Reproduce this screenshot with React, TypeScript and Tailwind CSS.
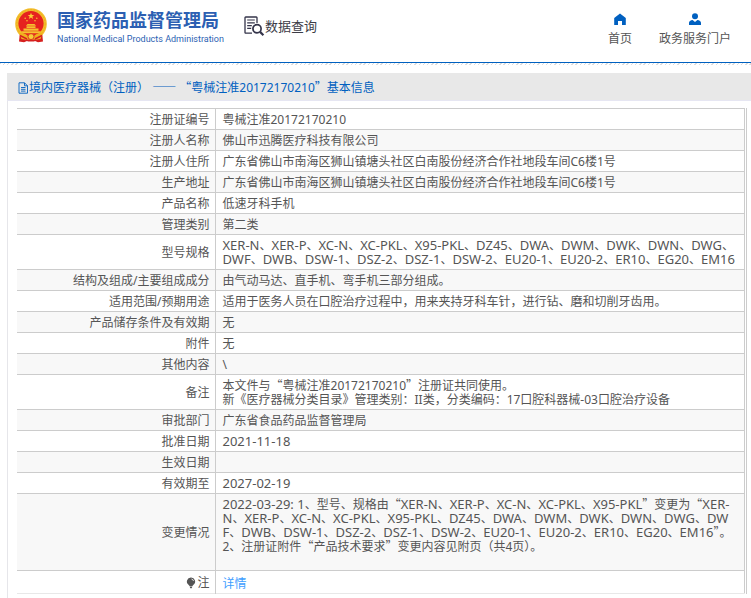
import React from 'react';

// Quotes take the full width of a Chinese character
const Wide: React.FC<{ children: React.ReactNode }> = ({ children }) => (
    <span className="font-['Noto_Sans_CJK_SC',sans-serif] leading-none">{children}</span>
);

const Quoted: React.FC<{ children: React.ReactNode }> = ({ children }) => (
    <>
        <Wide>“</Wide>
        {children}
        <Wide>”</Wide>
    </>
);

// Latin model codes and dates are set slightly larger than the Chinese text
const Codes: React.FC<{ text: string }> = ({ text }) => (
    <>
        {text.split('、').map((code, i) => (
            <React.Fragment key={i}>
                {i > 0 && '、'}
                <span className="text-[13px] leading-none">{code}</span>
            </React.Fragment>
        ))}
    </>
);

const rows: { label: string; value: React.ReactNode }[] = [
    { label: '注册证编号', value: '粤械注准20172170210' },
    { label: '注册人名称', value: '佛山市迅腾医疗科技有限公司' },
    { label: '注册人住所', value: '广东省佛山市南海区狮山镇塘头社区白南股份经济合作社地段车间C6楼1号' },
    { label: '生产地址', value: '广东省佛山市南海区狮山镇塘头社区白南股份经济合作社地段车间C6楼1号' },
    { label: '产品名称', value: '低速牙科手机' },
    { label: '管理类别', value: '第二类' },
    {
        label: '型号规格',
        value: (
            <>
                <Codes text="XER-N、XER-P、XC-N、XC-PKL、X95-PKL、DZ45、DWA、DWM、DWK、DWN、DWG、" />
                <br />
                <Codes text="DWF、DWB、DSW-1、DSZ-2、DSZ-1、DSW-2、EU20-1、EU20-2、ER10、EG20、EM16" />
            </>
        ),
    },
    { label: '结构及组成/主要组成成分', value: '由气动马达、直手机、弯手机三部分组成。' },
    { label: '适用范围/预期用途', value: '适用于医务人员在口腔治疗过程中，用来夹持牙科车针，进行钻、磨和切削牙齿用。' },
    { label: '产品储存条件及有效期', value: '无' },
    { label: '附件', value: '无' },
    { label: '其他内容', value: '\\' },
    {
        label: '备注',
        value: (
            <>
                本文件与<Quoted>粤械注准20172170210</Quoted>注册证共同使用。
                <br />
                新《医疗器械分类目录》管理类别：II类，分类编码：17口腔科器械-03口腔治疗设备
            </>
        ),
    },
    { label: '审批部门', value: '广东省食品药品监督管理局' },
    { label: '批准日期', value: <Codes text="2021-11-18" /> },
    { label: '生效日期', value: '' },
    { label: '有效期至', value: <Codes text="2027-02-19" /> },
    {
        label: '变更情况',
        value: (
            <>
                <Codes text="2022-03-29: 1" />、型号、规格由
                <Quoted>
                    <Codes text="XER-N、XER-P、XC-N、XC-PKL、X95-PKL" />
                </Quoted>
                变更为<Wide>“</Wide>
                <Codes text="XER-" />
                <br />
                <Codes text="N、XER-P、XC-N、XC-PKL、X95-PKL、DZ45、DWA、DWM、DWK、DWN、DWG、DW" />
                <br />
                <Codes text="F、DWB、DSW-1、DSZ-2、DSZ-1、DSW-2、EU20-1、EU20-2、ER10、EG20、EM16" />
                <Wide>”</Wide>。
                <br />
                2、注册证附件<Quoted>产品技术要求</Quoted>变更内容见附页（共4页）。
                <br />
                &nbsp;
            </>
        ),
    },
];

const Emblem = () => (
    <svg viewBox="0 0 32 35" className="h-[35px] w-8 shrink-0" aria-hidden="true">
        <path d="M5 24 4 33.500l5 .7 3-1.200h8l3 1.200 5-.7-1-9.500z" fill="#d6201f" />
        <circle cx="16" cy="16" r="15.800" fill="#f3bd2a" />
        <circle cx="16" cy="16" r="14.200" fill="none" stroke="#e5a51d" strokeWidth=".8" strokeDasharray="1.500 1.500" />
        <circle cx="16" cy="15.600" r="12.600" fill="#e6231f" />
        <path d="m16 4.800.9 2.300h2.400l-1.900 1.500.7 2.400-2.100-1.400-2.100 1.400.7-2.400-1.900-1.500h2.400z" fill="#f9cf35" />
        <g fill="#f5c22f">
            <circle cx="10.200" cy="10.200" r=".8" />
            <circle cx="21.800" cy="10.200" r=".8" />
            <circle cx="12" cy="12.800" r=".8" />
            <circle cx="20" cy="12.800" r=".8" />
            <path d="M12.500 16h7l1.500 1.800H11zM11.500 18.300h9v1.700h-9zM8.500 20.500h15v2.200h-15zM6 23.200h20l-1.600 2H7.600z" />
        </g>
        <path d="M4.500 25.500c4-.6 6.500.2 8 2.500h7c1.500-2.300 4-3.100 8-2.500l-2 5.500-4.500.8-2.500-1.600h-5l-2.500 1.600-4.500-.8z" fill="#efb11d" />
        <circle cx="16" cy="28.600" r="3" fill="#f7cb39" stroke="#d6201f" strokeWidth=".8" />
        <path d="M5 27.500 12 31M27 27.500 20 31M12.500 32.800h7" stroke="#d6201f" strokeWidth="1.400" />
    </svg>
);

const SearchDocIcon = () => (
    <svg viewBox="0 0 21 20" className="h-5 w-[21px] shrink-0" fill="none" stroke="#34344a" aria-hidden="true">
        <path d="M8 17.200H1.700a.7.7 0 0 1-.7-.7V1.700A.7.7 0 0 1 1.700 1h10.600a.7.7 0 0 1 .7.7V7" strokeWidth="1.300" />
        <path d="M3.200 4h7.600M3.200 6.800h7.600M3.200 9.600h4.600M3.200 12.400h4" strokeWidth="1.200" />
        <circle cx="13" cy="12.800" r="4.100" strokeWidth="1.700" />
        <path d="m16.100 15.900 3.300 3.300" strokeWidth="2.200" />
    </svg>
);

const Header = () => (
    <header className="flex h-[63px] justify-between border-b border-[#0060c0] bg-white pl-[15px] pr-5">
        <div className="flex items-start gap-5">
            <a href="#" className="flex gap-[10px] pt-2 text-[#2c5fb2]">
                <Emblem />
                <span className="flex flex-col">
                    <span className="text-lg font-bold leading-6">国家药品监督管理局</span>
                    <span className="font-['Roboto',sans-serif] text-[9px] leading-[14px]">
                        National Medical Products Administration
                    </span>
                </span>
            </a>
            <a href="#" className="flex items-center pt-4 text-[13px] leading-5 text-[#3c3c46]">
                <SearchDocIcon />
                数据查询
            </a>
        </div>
        <nav className="flex gap-[27px] pt-[13px] text-xs leading-[14px] text-[#555]">
            <a href="#" className="flex flex-col items-center gap-[7px]">
                <svg viewBox="0 0 12 12" className="size-3" fill="#0060c0" aria-hidden="true">
                    <path d="M6 .5 11.800 5v7H8V8H4v4H.2V5z" />
                </svg>
                首页
            </a>
            <a href="#" className="flex flex-col items-center gap-[7px]">
                <svg viewBox="0 0 12 12" className="size-3" fill="#0060c0" aria-hidden="true">
                    <circle cx="6" cy="3.200" r="3" />
                    <path d="M0 12V9.800C0 8.200 1.500 7.300 3.600 7L6 9l2.400-2C10.500 7.300 12 8.200 12 9.800V12z" />
                </svg>
                政务服务门户
            </a>
        </nav>
    </header>
);

export default function App() {
    return (
        <div
            lang="zh-CN"
            className="flex min-h-screen flex-col bg-white font-['Noto_Sans','Noto_Sans_CJK_SC',sans-serif] text-xs text-[#555]"
        >
            <Header />
            <div className="h-[2px] bg-[repeating-linear-gradient(135deg,#ddd_0_1px,#fff_1px_3px)]" />

            <main className="ml-[7px] mt-2 flex flex-1 flex-col">
                <h1 className="flex h-7 items-center border-b border-[#e6e6f2] bg-[#e8e8e8] pl-[11px] pt-[2px] leading-[14px] text-[#0060c0]">
                    <svg viewBox="0 0 11 12" className="h-3 w-[11px] shrink-0" fill="none" stroke="#0060c0" aria-hidden="true">
                        <path d="M1 .8h5.500l3 3v7.400H1zM6.500.8v3h3M3 5.500h4.500M3 7.300h4.500M3 9.100h4.500" strokeWidth=".9" />
                    </svg>
                    <span>
                        境内医疗器械（注册） <Wide>——</Wide> <Quoted>粤械注准20172170210</Quoted>基本信息
                    </span>
                </h1>

                <div className="flex-1 border-l border-[#e6e6ea] pl-[9px] pr-1 pt-[7px]">
                    <div className="border-r border-[#ccc] pr-px">
                        <table className="w-full table-fixed border-collapse border-r border-t border-[#ccc]">
                            <colgroup>
                                <col className="w-[198px]" />
                                <col />
                            </colgroup>
                            <tbody>
                                {rows.map(({ label, value }) => (
                                    <tr key={label} className="h-[21px] border-b border-[#ccc] even:bg-[#f8f8f8]">
                                        <th
                                            scope="row"
                                            className="border-r border-[#ccc] pb-[2px] pr-[5px] pt-1 text-right align-middle font-normal leading-[14px]"
                                        >
                                            {label}
                                        </th>
                                        <td className="whitespace-nowrap pb-[2px] pl-[7px] pt-1 align-middle leading-[14px]">{value}</td>
                                    </tr>
                                ))}
                                <tr className="h-[23px] border-b border-[#e8e8e8]">
                                    <th scope="row" className="border-r border-[#ccc] pr-[5px] pt-[2px] font-normal leading-[14px]">
                                        <span className="flex items-center justify-end gap-px">
                                            <svg viewBox="0 0 10 12" className="h-3 w-[10px]" fill="#555" aria-hidden="true">
                                                <path d="M5 .5a4 4 0 0 0-2.500 7.200L3.600 9h2.800l1.100-1.300A4 4 0 0 0 5 .5zM3.600 9.500h2.800L5.700 11.300H4.300z" />
                                                <path d="M5.500 2a2.500 2.500 0 0 1 2 2" fill="none" stroke="#fff" strokeWidth=".8" />
                                            </svg>
                                            注
                                        </span>
                                    </th>
                                    <td className="pl-[7px] pt-1 align-middle leading-[14px]">
                                        <a href="#" className="text-[#409eff]">
                                            详情
                                        </a>
                                    </td>
                                </tr>
                            </tbody>
                        </table>
                    </div>
                </div>
            </main>
        </div>
    );
}
